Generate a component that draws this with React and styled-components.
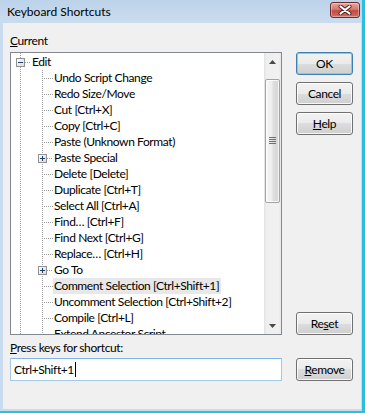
import React from 'react';
import styled, { createGlobalStyle, css } from 'styled-components';

const FONT = `Lato, "Liberation Sans", "Noto Sans", sans-serif`;
const TIGHT = '-0.4px';

const Global = createGlobalStyle`
  html, body { margin: 0; padding: 0; background: #c8dbef; }
  body { font-family: ${FONT}; font-size: 12px; color: #000; }
`;

const Window = styled.div`
  width: 365px;
  height: 413px;
  box-sizing: border-box;
  display: flex;
  flex-direction: column;
  background: #c8dbef;
  border-right: 3px solid #25c1e5;
  border-bottom: 2px solid #25c1e5;
`;

const TitleBar = styled.div`
  height: 23px;
  flex: 0 0 23px;
  display: flex;
  align-items: center;
  justify-content: space-between;
  padding: 0 0 0 7px;
  box-sizing: border-box;
  background: linear-gradient(to bottom, #bdd3ea, #cadcef);
`;

const Title = styled.span`
  font-family: ${FONT};
  font-size: 12px;
  line-height: 15px;
  margin-top: -1px;
  color: #000;
`;

const CloseButton = styled.div`
  width: 30px;
  height: 16px;
  box-sizing: border-box;
  margin: -3px 2px 0 0;
  border: 1px solid #6d2b2b;
  border-radius: 3px;
  background: linear-gradient(to bottom, #e3a79f 0%, #d57a70 45%, #c14b3f 55%, #d0705f 100%);
  box-shadow: inset 0 0 0 1px rgba(255, 255, 255, 0.35);
  display: flex;
  align-items: center;
  justify-content: center;
`;

const Frame = styled.div`
  flex: 1;
  display: flex;
  padding: 0 1px 2px 3px;
  min-height: 0;
`;

const Client = styled.div`
  flex: 1;
  background: #f0f0f0;
  display: grid;
  grid-template-columns: 272px 57px;
  column-gap: 14px;
  align-items: stretch;
  align-content: start;
  padding: 10px 8px 0 7px;
  box-sizing: border-box;
`;

const LeftColumn = styled.div`
  display: flex;
  flex-direction: column;
`;

const RightColumn = styled.div`
  display: flex;
  flex-direction: column;
  padding-top: 19px;
`;

const Label = styled.div`
  font-family: ${FONT};
  font-size: 12px;
  letter-spacing: ${TIGHT};
  line-height: 15px;
  height: 15px;
  margin-top: ${p => p.$gap || 0}px;
  color: #000;
`;

const TreeBox = styled.div`
  margin-top: 4px;
  height: 283px;
  box-sizing: border-box;
  border: 1px solid #828790;
  background: #fff;
  display: flex;
  overflow: hidden;
`;

const TreeList = styled.div`
  flex: 1;
  overflow: hidden;
  padding-top: 1px;
  background-image: linear-gradient(to bottom, #a0a0a0 50%, transparent 50%);
  background-size: 1px 2px;
  background-repeat: repeat-y;
  background-position: 9px 0;
`;

const Row = styled.div`
  display: flex;
  align-items: center;
  height: 16px;
  white-space: nowrap;
`;

const dotsV = css`
  background-image: linear-gradient(to bottom, #a0a0a0 50%, transparent 50%);
  background-size: 1px 2px;
  background-repeat: repeat-y;
`;

const dotsH = css`
  background-image: linear-gradient(to right, #a0a0a0 50%, transparent 50%);
  background-size: 2px 1px;
  background-repeat: repeat-x;
`;

const Guide = styled.span`
  position: relative;
  flex: 0 0 22px;
  height: 16px;
  ${p => p.$line && css`
    &::before {
      content: '';
      position: absolute;
      left: 9px;
      top: 0;
      bottom: 0;
      width: 1px;
      ${dotsV};
    }
  `}
  ${p => p.$branch && css`
    &::after {
      content: '';
      position: absolute;
      left: ${p.$expander ? 14 : 11}px;
      right: 2px;
      top: 8px;
      height: 1px;
      ${dotsH};
    }
  `}
`;

const ExpanderBox = styled.svg`
  position: absolute;
  left: 5px;
  top: 4px;
  z-index: 1;
`;

const ItemText = styled.span`
  font-family: ${FONT};
  font-size: 12px;
  letter-spacing: ${TIGHT};
  line-height: 16px;
  height: 16px;
  margin-left: -2px;
  padding: 0 2px 0 1px;
  color: #000;
  background: ${p => (p.$selected ? '#e8e8e8' : 'transparent')};
`;

const ScrollBar = styled.div`
  flex: 0 0 17px;
  display: flex;
  flex-direction: column;
  background: linear-gradient(to right, #e2e2e2 0%, #efefef 15%, #f1f1f1 85%, #e8e8e8 100%);
`;

const ArrowButton = styled.div`
  height: 17px;
  flex: 0 0 17px;
  display: flex;
  align-items: center;
  justify-content: center;
`;

const Track = styled.div`
  flex: 1;
  display: flex;
  flex-direction: column;
`;

const Thumb = styled.div`
  margin: 0 1px;
  box-sizing: border-box;
  border: 1px solid #a3a3a3;
  border-radius: 2px;
  background: linear-gradient(to right, #f6f6f6 0%, #ededed 45%, #dedede 55%, #d6d6d6 100%);
  box-shadow: inset 0 0 0 1px rgba(255, 255, 255, 0.75);
  display: flex;
  align-items: center;
  justify-content: center;
`;

const Button = styled.button`
  width: 57px;
  height: 23px;
  padding: 0;
  margin-top: ${p => p.$gap || 0}px;
  box-sizing: border-box;
  border: 1px solid ${p => (p.$default ? '#3c7fb1' : '#707070')};
  border-radius: 3px;
  background: linear-gradient(to bottom, #f2f2f2 0%, #ebebeb 50%, #dddddd 50%, #cfcfcf 100%);
  box-shadow: inset 0 0 0 1px ${p => (p.$default ? '#6fd3f7' : 'rgba(255,255,255,0.8)')};
  font-family: ${FONT};
  font-size: 12px;
  letter-spacing: ${TIGHT};
  color: #000;
  line-height: 15px;
`;

const Spacer = styled.div`
  flex: 1;
`;

const KeyInput = styled.div`
  margin-top: 3px;
  height: 23px;
  box-sizing: border-box;
  border: 1px solid #a4c9e3;
  border-top-color: #7eb4ea;
  background: #fff;
  display: flex;
  align-items: center;
  padding-left: 3px;
  font-family: ${FONT};
  font-size: 12px;
  letter-spacing: ${TIGHT};
  color: #000;
`;

const Caret = styled.span`
  width: 1px;
  height: 15px;
  background: #000;
  margin-left: 1px;
`;

const Expander = ({ open }) => (
  <ExpanderBox width="9" height="9" viewBox="0 0 9 9">
    <defs>
      <linearGradient id={open ? 'gm' : 'gp'} x1="0" y1="0" x2="1" y2="1">
        <stop offset="0" stopColor="#ffffff" />
        <stop offset="1" stopColor="#d8d8d8" />
      </linearGradient>
    </defs>
    <rect x="0.5" y="0.5" width="8" height="8" fill={`url(#${open ? 'gm' : 'gp'})`} stroke="#919191" />
    <rect x="2" y="4" width="5" height="1" fill="#21406e" />
    {!open && <rect x="4" y="2" width="1" height="5" fill="#21406e" />}
  </ExpanderBox>
);

const children = [
  { text: 'Undo Script Change' },
  { text: 'Redo Size/Move' },
  { text: 'Cut [Ctrl+X]' },
  { text: 'Copy [Ctrl+C]' },
  { text: 'Paste (Unknown Format)' },
  { text: 'Paste Special', collapsed: true },
  { text: 'Delete [Delete]' },
  { text: 'Duplicate [Ctrl+T]' },
  { text: 'Select All [Ctrl+A]' },
  { text: 'Find\u2026 [Ctrl+F]' },
  { text: 'Find Next [Ctrl+G]' },
  { text: 'Replace\u2026 [Ctrl+H]' },
  { text: 'Go To', collapsed: true },
  { text: 'Comment Selection [Ctrl+Shift+1]', selected: true },
  { text: 'Uncomment Selection [Ctrl+Shift+2]' },
  { text: 'Compile [Ctrl+L]' },
  { text: 'Extend Ancestor Script' },
];

const CloseGlyph = () => (
  <svg width="14" height="10" viewBox="0 0 14 10">
    <path d="M2.5 1.5 L11.5 8.5 M11.5 1.5 L2.5 8.5" stroke="#4a2020" strokeWidth="4" strokeLinecap="round" />
    <path d="M2.5 1.5 L11.5 8.5 M11.5 1.5 L2.5 8.5" stroke="#ffffff" strokeWidth="2.2" strokeLinecap="round" />
  </svg>
);

const ArrowGlyph = ({ down }) => (
  <svg width="7" height="4" viewBox="0 0 7 4">
    <path d={down ? 'M0 0 H7 L3.5 4 Z' : 'M0 4 H7 L3.5 0 Z'} fill="#4a4a4a" />
  </svg>
);

const Gripper = () => (
  <svg width="7" height="8" viewBox="0 0 7 8">
    {[0, 2, 4, 6].map(y => (
      <rect key={y} x="0" y={y} width="7" height="1" fill="#6e6e6e" />
    ))}
  </svg>
);

export default function App() {
  return (
    <>
      <Global />
      <Window>
        <TitleBar>
          <Title>Keyboard Shortcuts</Title>
          <CloseButton>
            <CloseGlyph />
          </CloseButton>
        </TitleBar>
        <Frame>
          <Client>
            <LeftColumn>
              <Label>
                <u>C</u>urrent
              </Label>
              <TreeBox>
                <TreeList>
                  <Row>
                    <Guide $branch $expander>
                      <Expander open />
                    </Guide>
                    <ItemText>Edit</ItemText>
                  </Row>
                  {children.map(c => (
                    <Row key={c.text}>
                      <Guide />
                      <Guide $line $branch $expander={c.collapsed}>
                        {c.collapsed && <Expander />}
                      </Guide>
                      <ItemText $selected={c.selected}>{c.text}</ItemText>
                    </Row>
                  ))}
                </TreeList>
                <ScrollBar>
                  <ArrowButton>
                    <ArrowGlyph />
                  </ArrowButton>
                  <Track>
                    <Thumb style={{ marginTop: 9, height: 124 }}>
                      <Gripper />
                    </Thumb>
                  </Track>
                  <ArrowButton>
                    <ArrowGlyph down />
                  </ArrowButton>
                </ScrollBar>
              </TreeBox>
              <Label $gap={5}>
                <u>P</u>ress keys for shortcut:
              </Label>
              <KeyInput>
                Ctrl+Shift+1
                <Caret />
              </KeyInput>
            </LeftColumn>
            <RightColumn>
              <Button $default>OK</Button>
              <Button $gap={7}>Cancel</Button>
              <Button $gap={7}>
                <u>H</u>elp
              </Button>
              <Spacer />
              <Button>
                Re<u>s</u>et
              </Button>
              <Button $gap={23}>
                <u>R</u>emove
              </Button>
            </RightColumn>
          </Client>
        </Frame>
      </Window>
    </>
  );
}
